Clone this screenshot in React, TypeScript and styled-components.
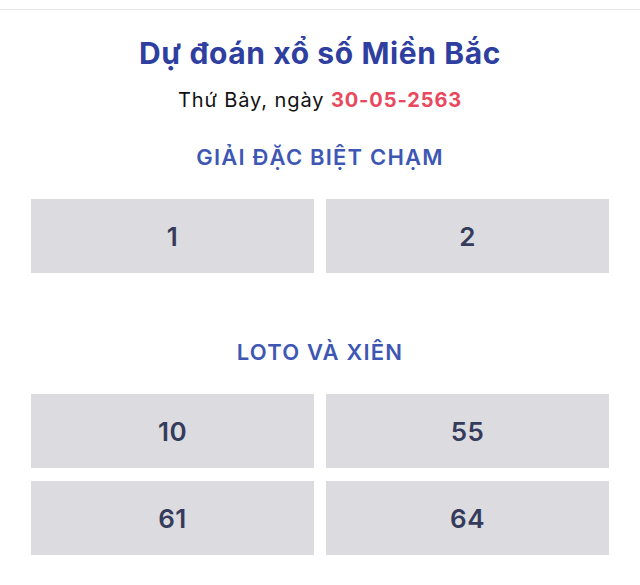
import React from "react";
import styled, { createGlobalStyle } from "styled-components";

const Global = createGlobalStyle`
  html, body { margin: 0; padding: 0; background: #ffffff; }
  body { font-family: Inter, Roboto, "Noto Sans", sans-serif; }
`;

const Page = styled.div`
  border-top: 1px solid #e6e6e8;
  margin-top: 9px;
  padding: 0 31px;
`;

const Title = styled.h1`
  margin: 26px 0 0;
  text-align: center;
  font-size: 30px;
  line-height: 34px;
  letter-spacing: 0.6px;
  font-weight: 700;
  color: #2f3fa0;
`;

const DateLine = styled.div`
  margin-top: 18px;
  text-align: center;
  font-size: 20px;
  line-height: 24px;
  letter-spacing: 0.9px;
  color: #111;
`;

const DateValue = styled.span`
  color: #e8495e;
  font-weight: 700;
`;

const Heading = styled.h2<{ $top: number }>`
  margin: ${(p) => p.$top}px 0 0;
  text-align: center;
  font-size: 22px;
  line-height: 26px;
  letter-spacing: 1.2px;
  font-weight: 600;
  color: #3e57b4;
`;

const Grid = styled.div`
  margin-top: 29px;
  display: grid;
  grid-template-columns: 1fr 1fr;
  column-gap: 12px;
  row-gap: 13px;
`;

const Cell = styled.div`
  height: 74px;
  background: #dcdce0;
  display: flex;
  align-items: center;
  justify-content: center;
  font-size: 26px;
  font-weight: 600;
  letter-spacing: 0.5px;
  color: #353b5b;
`;

export default function App() {
  return (
    <>
      <Global />
      <Page>
        <Title>Dự đoán xổ số Miền Bắc</Title>
        <DateLine>
          Thứ Bảy, ngày <DateValue>30-05-2563</DateValue>
        </DateLine>
        <Heading $top={32}>GIẢI ĐẶC BIỆT CHẠM</Heading>
        <Grid>
          <Cell>1</Cell>
          <Cell>2</Cell>
        </Grid>
        <Heading $top={66}>LOTO VÀ XIÊN</Heading>
        <Grid>
          <Cell>10</Cell>
          <Cell>55</Cell>
          <Cell>61</Cell>
          <Cell>64</Cell>
        </Grid>
      </Page>
    </>
  );
}
